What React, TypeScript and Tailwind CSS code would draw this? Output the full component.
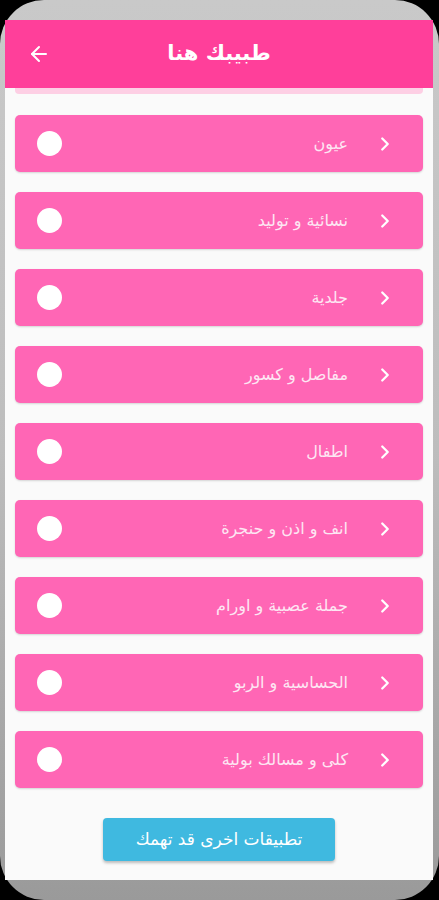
import { ChevronRight, ArrowLeft } from "lucide-react";

const items = [
  "عيون",
  "نسائية و توليد",
  "جلدية",
  "مفاصل و كسور",
  "اطفال",
  "انف و اذن و حنجرة",
  "جملة عصبية و اورام",
  "الحساسية و الربو",
  "كلى و مسالك بولية",
];

export default function App() {
  return (
    <div className="w-[439px] h-[900px] bg-black overflow-hidden" style={{ fontFamily: '"DejaVu Sans", "Noto Sans", sans-serif' }}>
      <div className="h-full rounded-[44px] bg-gradient-to-b from-[#c9c9c9] via-[#bdbdbd] to-[#9a9a9a] pt-[20px] pl-[5px] pr-[6px] pb-[20px]">
        <div className="h-full bg-[#fafafa] flex flex-col">
          {/* Header */}
          <div className="h-[68px] bg-[#ff3f9a] flex items-center relative shrink-0">
            <ArrowLeft className="w-6 h-6 text-white ml-[22px]" strokeWidth={2} />
            <h1 className="absolute inset-x-0 text-center text-white text-[21px] font-bold">طبيبك هنا</h1>
          </div>
          <div className="mx-[10px] h-[6px] bg-[#ffb3d6] rounded-b-sm opacity-60" />

          {/* List */}
          <div className="flex flex-col gap-[20px] px-[10px] pt-[21px]">
            {items.map((name) => (
              <div
                key={name}
                dir="rtl"
                className="h-[57px] bg-[#ff66b5] rounded-[5px] shadow-[0_1px_2px_rgba(0,0,0,0.15)] flex items-center pr-[27px] pl-[22px]"
              >
                <ChevronRight className="w-[22px] h-[22px] text-white" strokeWidth={2.5} />
                <span className="mr-[26px] text-[16px] text-[#fde7f3]">{name}</span>
                <span className="mr-auto w-[25px] h-[25px] rounded-full bg-white" />
              </div>
            ))}
          </div>

          {/* Button */}
          <div className="flex justify-center mt-[30px]">
            <button className="w-[232px] h-[43px] rounded-[4px] bg-[#3fb9e0] text-white text-[17px] shadow-[0_2px_3px_rgba(0,0,0,0.25)]">
              تطبيقات اخرى قد تهمك
            </button>
          </div>
        </div>
      </div>
    </div>
  );
}
